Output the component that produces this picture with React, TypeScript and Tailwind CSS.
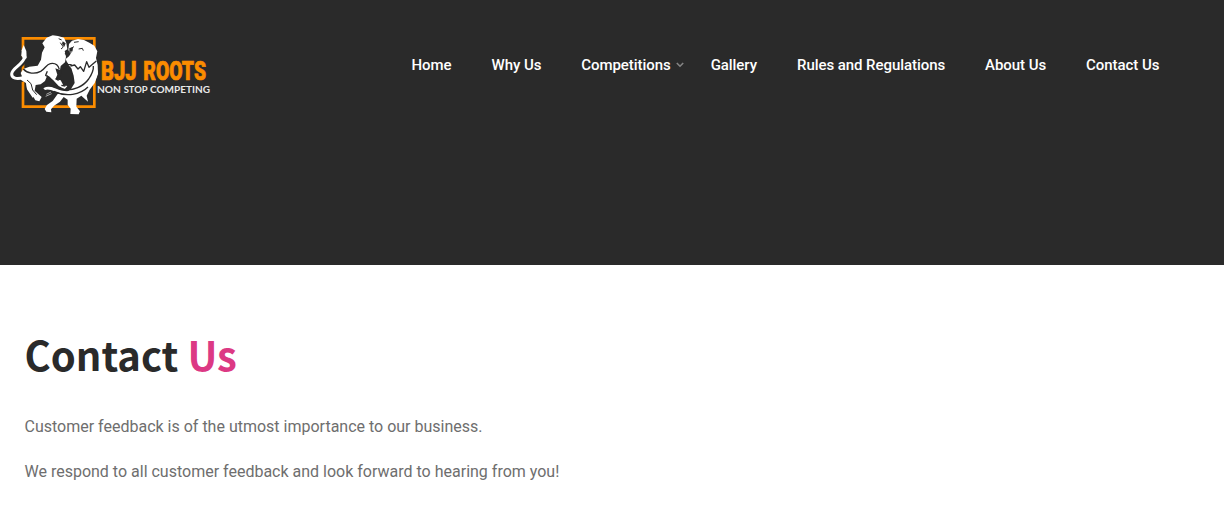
type NavItem = {
  label: string;
  hasMenu?: boolean;
};

const navItems: NavItem[] = [
  { label: "Home" },
  { label: "Why Us" },
  { label: "Competitions", hasMenu: true },
  { label: "Gallery" },
  { label: "Rules and Regulations" },
  { label: "About Us" },
  { label: "Contact Us" },
];

function Logo() {
  return (
    <svg
      viewBox="0 0 636 300"
      className="h-[100px] w-[212px] shrink-0 overflow-visible"
      role="img"
      aria-label="BJJ Roots"
    >
      <path d="M69 40H283V245H69Z" fill="none" stroke="#fb8c00" strokeWidth="8" />

      {/* Left lion */}
      <path
        d="M70 159C50 165 35 160 35 147C36 128 70 120 75 96L72 76"
        fill="none"
        stroke="#2a2a2a"
        strokeWidth="20"
      />
      <path
        d="M72 157C50 164 35 160 35 147C36 128 70 120 75 94"
        fill="none"
        stroke="#fff"
        strokeWidth="9"
      />
      <g fill="#fff">
        <path d="M71 60L79 78L80 99L71 106L64 91L65 76Z" />
        <path d="M127 55L140 38L158 31L174 33L192 38L199 54L202 73L194 78L198 95L195 112L182 123L180 135L166 130L172 149L166 163L182 166L190 181L202 183L194 193L176 183L160 166L142 151L135 168L122 178L107 180L104 197L125 216L118 229L106 226L94 205L81 190L79 171L67 157L62 144L70 132L88 125L113 122L123 104L126 83L134 67Z" />
        <path d="M67 151L90 165L94 190L109 211L98 218L81 193L78 174L62 164Z" />
      </g>

      {/* Right lion */}
      <g fill="#fff">
        <path d="M207 57L216 47L234 42L252 45L268 53L283 62L292 79L288 99L293 120L294 147L284 174L269 194L260 212L264 230L244 212L230 221L229 245L240 259L236 268L211 267L212 251L203 239L203 224L191 216L180 230L162 242L153 253L154 262L139 260L134 252L141 240L158 228L173 207L196 205L213 192L224 174L221 152L214 130L203 117L197 102L207 94L212 86L205 75Z" />
        <path d="M130 190C143 180 155 185 169 191C190 202 223 202 253 183C275 169 284 148 285 132L293 137C292 166 275 187 253 199C220 216 189 208 166 200C151 194 143 191 135 195Z" />
      </g>

      {/* Manes, muscles and faces */}
      <g fill="none" stroke="#2a2a2a" strokeWidth="4" strokeLinejoin="round">
        <path d="M70 132C82 146 105 148 122 139C138 129 138 119 151 116C165 113 174 120 178 133" />
        <path d="M211 123L224 120L234 132L241 125L251 139L260 110L267 127L289 108" />
        <path d="M133 185C153 176 167 187 184 192C220 201 252 182 266 162C278 144 281 132 280 123" />
        <path d="M161 199C199 217 241 209 264 186" />
        <path d="M142 139L137 151L148 157L158 169M167 161L176 166M184 181L196 183" />
        <path d="M81 165L93 176L98 195L110 209" strokeWidth="3" />
        <path d="M176 41L185 45M181 53L190 66L183 72" strokeWidth="3" />
        <path d="M222 52L236 50M222 65L211 71M216 79L208 87M236 72L247 70L250 77" strokeWidth="3" />
        <path d="M198 111L204 119L215 119M203 82L195 88" />
      </g>
      <path d="M185 137L203 123L215 135L218 157L204 169L195 184L191 168L177 162L183 150Z" fill="#2a2a2a" />
      <path d="M188 49L197 55L193 65L186 57ZM208 69L219 67L218 77L208 82Z" fill="#2a2a2a" />
      <path d="M139 208L153 201M137 214L155 206" stroke="#aaa" strokeWidth="3" />

      <g className="fill-[#fb8c00] stroke-[#fb8c00] stroke-2 font-['Roboto'] text-[75px] font-black">
        <text x="303" y="165" textLength="107" lengthAdjust="spacingAndGlyphs">
          BJJ
        </text>
        <text x="430" y="165" textLength="188" lengthAdjust="spacingAndGlyphs">
          ROOTS
        </text>
      </g>
      <g className="fill-[#e8e8e8] font-['Lato'] text-[30px] font-bold">
        <text x="291" y="203" textLength="72" lengthAdjust="spacingAndGlyphs">
          NON
        </text>
        <text x="371" y="203" textLength="72" lengthAdjust="spacingAndGlyphs">
          STOP
        </text>
        <text x="450" y="203" textLength="180" lengthAdjust="spacingAndGlyphs">
          COMPETING
        </text>
      </g>
    </svg>
  );
}

function NavLink({ item }: { item: NavItem }) {
  return (
    <a href="#" className="flex items-center whitespace-nowrap">
      {item.label}
      {item.hasMenu && (
        <svg viewBox="0 0 8 6" className="-mr-[13px] ml-[5px] h-1.5 w-2" fill="none">
          <path d="M0.8 1L4 4.2L7.2 1" stroke="#858585" strokeWidth="1.6" />
        </svg>
      )}
    </a>
  );
}

function Header() {
  return (
    <header className="flex h-[265px] items-start bg-[#2a2a2a] pt-[25px]">
      <Logo />
      <nav className="ml-[199.5px] flex gap-10 pt-7 text-[15px] leading-6 font-medium tracking-[-0.06px] text-white">
        {navItems.map((item) => (
          <NavLink key={item.label} item={item} />
        ))}
      </nav>
    </header>
  );
}

export default function App() {
  return (
    <div className="min-h-screen bg-white font-['Roboto',sans-serif]">
      <Header />
      <main className="px-[24.5px] pt-[59px]">
        <h1 className="font-['Noto_Sans_CJK_JP',sans-serif] text-[40px] leading-[60px] font-bold text-[#2a2a2a]">
          Contact <span className="text-[#dc3984]">Us</span>
        </h1>
        <p className="mt-[31px] text-base leading-6 text-[#6e6e6e]">
          Customer feedback is of the utmost importance to our business.
        </p>
        <p className="mt-[21px] text-base leading-6 text-[#6e6e6e]">
          We respond to all customer feedback and look forward to hearing from you!
        </p>
      </main>
    </div>
  );
}
